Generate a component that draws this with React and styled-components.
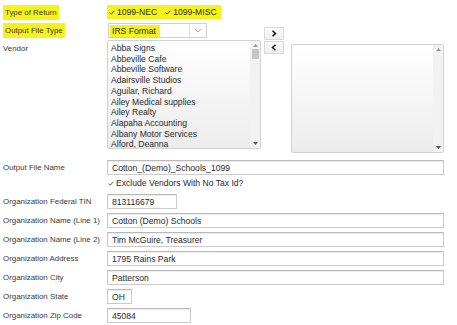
import React from "react";
import styled, { createGlobalStyle } from "styled-components";

const GlobalStyle = createGlobalStyle`
  html, body {
    margin: 0;
    padding: 0;
    background: #ffffff;
  }
  body {
    font-family: "Liberation Sans", Arial, sans-serif;
    color: #333333;
  }
`;

const Page = styled.div`
  width: 457px;
  height: 325px;
  overflow: hidden;
  padding: 3px 0 0 3px;
  box-sizing: border-box;
  display: flex;
  flex-direction: column;
`;

const Row = styled.div`
  display: flex;
  align-items: ${(p) => (p.$top ? "flex-start" : "center")};
  height: ${(p) => p.$height || 19}px;
`;

const Label = styled.div`
  width: 104px;
  flex-shrink: 0;
  font-size: 7.9px;
  color: #3a3a3a;
  align-self: ${(p) => (p.$top ? "flex-start" : "center")};
  margin-top: ${(p) => (p.$top ? "4px" : "0")};
`;

const Marked = styled.span`
  background: #f6f21c;
  padding: 3px 2px;
`;

const Checks = styled.div`
  display: flex;
  align-items: center;
  gap: 8px;
  background: #f6f21c;
  padding: 2px 4px 2px 2px;
  font-size: 8.6px;
`;

const CheckItem = styled.label`
  display: flex;
  align-items: center;
  gap: 2px;
  color: #2a2a2a;
`;

const Tick = () => (
  <svg width="6" height="5" viewBox="0 0 6 5">
    <path d="M0.6 2.6 L2.3 4.1 L5.4 0.8" fill="none" stroke="#555" strokeWidth="1" />
  </svg>
);

const Select = styled.div`
  width: 99px;
  height: 15px;
  box-sizing: border-box;
  border: 1px solid #cfcfcf;
  display: flex;
  align-items: stretch;
  margin-left: 1px;
`;

const SelectText = styled.div`
  flex: 1;
  display: flex;
  align-items: center;
  font-size: 8.6px;
  padding-left: 1px;
  color: #2a2a2a;
  & span {
    background: #f6f21c;
    padding: 1px 4px 1px 2px;
  }
`;

const SelectArrow = styled.div`
  width: 16px;
  border-left: 1px solid #e2e2e2;
  display: flex;
  align-items: center;
  justify-content: center;
`;

const ListArea = styled.div`
  display: flex;
  align-items: flex-start;
`;

const ListBox = styled.div`
  width: ${(p) => p.$width}px;
  height: ${(p) => p.$height}px;
  margin-top: ${(p) => p.$offset || 0}px;
  box-sizing: border-box;
  border: 1px solid #d2d2d2;
  border-radius: 2px;
  background: linear-gradient(to bottom, #ffffff, #ececec);
  display: flex;
  overflow: hidden;
`;

const Items = styled.div`
  flex: 1;
  padding: 2px 0 0 3px;
  overflow: hidden;
`;

const Item = styled.div`
  font-size: 8.6px;
  line-height: 10.7px;
  color: #2a2a2a;
  white-space: nowrap;
`;

const Scroll = styled.div`
  width: 10px;
  display: flex;
  flex-direction: column;
  align-items: center;
  background: #f2f2f2;
  padding: 3px 0;
  box-sizing: border-box;
`;

const Thumb = styled.div`
  width: 7px;
  height: 10px;
  background: #c6c6c6;
  margin-top: 2px;
`;

const Spacer = styled.div`
  flex: 1;
`;

const Mover = styled.div`
  display: flex;
  flex-direction: column;
  margin: -13px 7px 0 3px;
`;

const MoveButton = styled.div`
  width: 20px;
  height: 13px;
  box-sizing: border-box;
  border: 1px solid #dadada;
  background: linear-gradient(to bottom, #fbfbfb, #eeeeee);
  display: flex;
  align-items: center;
  justify-content: center;
  margin-top: ${(p) => (p.$second ? "1px" : "0")};
`;

const Input = styled.div`
  width: ${(p) => p.$width}px;
  height: 15px;
  box-sizing: border-box;
  border: 1px solid #cbcbcb;
  border-top-color: #b9b9b9;
  box-shadow: inset 0 1px 1px rgba(0, 0, 0, 0.08);
  background: #ffffff;
  font-size: 8.6px;
  color: #2a2a2a;
  display: flex;
  align-items: center;
  padding-left: 4px;
`;

const Exclude = styled.div`
  display: flex;
  align-items: center;
  gap: 2px;
  height: 14px;
  padding-left: 105px;
  font-size: 8.6px;
  color: #2a2a2a;
  margin-bottom: 2px;
`;

const Arrow = ({ dir }) => (
  <svg width="6" height="7" viewBox="0 0 6 7">
    <path
      d={dir === "right" ? "M1.5 0.8 L4.5 3.5 L1.5 6.2" : "M4.5 0.8 L1.5 3.5 L4.5 6.2"}
      fill="none"
      stroke="#111"
      strokeWidth="1.5"
    />
  </svg>
);

const Chevron = () => (
  <svg width="8" height="5" viewBox="0 0 8 5">
    <path d="M1 1 L4 4 L7 1" fill="none" stroke="#aaa" strokeWidth="1" />
  </svg>
);

const Caret = ({ up }) => (
  <svg width="5" height="3" viewBox="0 0 5 3">
    <path d={up ? "M0 3 L2.5 0 L5 3 Z" : "M0 0 L2.5 3 L5 0 Z"} fill={up ? "#9a9a9a" : "#555"} />
  </svg>
);

const vendors = [
  "Abba Signs",
  "Abbeville Cafe",
  "Abbeville Software",
  "Adairsville Studios",
  "Aguilar, Richard",
  "Ailey Medical supplies",
  "Ailey Realty",
  "Alapaha Accounting",
  "Albany Motor Services",
  "Alford, Deanna",
];

const fields = [
  { label: "Organization Federal TIN", value: "813116679", width: 70 },
  { label: "Organization Name (Line 1)", value: "Cotton (Demo) Schools", width: 337 },
  { label: "Organization Name (Line 2)", value: "Tim McGuire, Treasurer", width: 337 },
  { label: "Organization Address", value: "1795 Rains Park", width: 337 },
  { label: "Organization City", value: "Patterson", width: 337 },
  { label: "Organization State", value: "OH", width: 25 },
  { label: "Organization Zip Code", value: "45084", width: 84 },
];

export default function App() {
  return (
    <>
      <GlobalStyle />
      <Page>
        <Row $height={18}>
          <Label>
            <Marked>Type of Return</Marked>
          </Label>
          <Checks>
            <CheckItem>
              <Tick /> 1099-NEC
            </CheckItem>
            <CheckItem>
              <Tick /> 1099-MISC
            </CheckItem>
          </Checks>
        </Row>
        <Row $height={19}>
          <Label>
            <Marked>Output File Type</Marked>
          </Label>
          <Select>
            <SelectText>
              <span>IRS Format</span>
            </SelectText>
            <SelectArrow>
              <Chevron />
            </SelectArrow>
          </Select>
        </Row>
        <Row $top $height={119}>
          <Label $top>Vendor</Label>
          <ListArea>
            <ListBox $width={154} $height={109}>
              <Items>
                {vendors.map((v) => (
                  <Item key={v}>{v}</Item>
                ))}
              </Items>
              <Scroll>
                <Caret up />
                <Thumb />
                <Spacer />
                <Caret />
              </Scroll>
            </ListBox>
            <Mover>
              <MoveButton>
                <Arrow dir="right" />
              </MoveButton>
              <MoveButton $second>
                <Arrow dir="left" />
              </MoveButton>
            </Mover>
            <ListBox $width={153} $height={109} $offset={4}>
              <Items />
              <Scroll>
                <Caret up />
                <Spacer />
                <Caret />
              </Scroll>
            </ListBox>
          </ListArea>
        </Row>
        <Row $height={17}>
          <Label>Output File Name</Label>
          <Input $width={337}>Cotton_(Demo)_Schools_1099</Input>
        </Row>
        <Exclude>
          <Tick /> Exclude Vendors With No Tax Id?
        </Exclude>
        {fields.map((f) => (
          <Row key={f.label}>
            <Label>{f.label}</Label>
            <Input $width={f.width}>{f.value}</Input>
          </Row>
        ))}
      </Page>
    </>
  );
}
